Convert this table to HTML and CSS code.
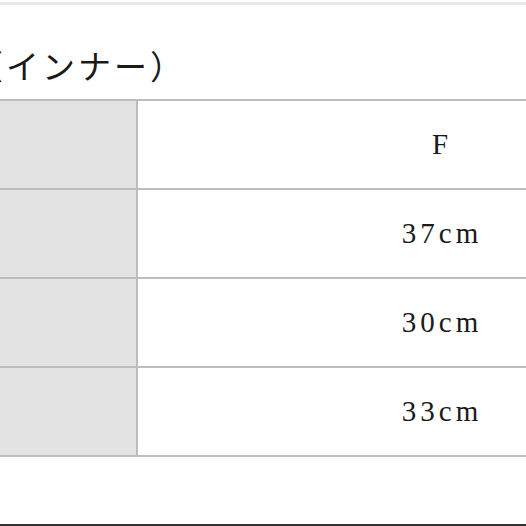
FILE: index.html
```html
<!DOCTYPE html>
<html lang="ja">
<head>
<meta charset="utf-8">
<title>サイズ（インナー）</title>
<link rel="stylesheet" href="styles.css">
</head>
<body>
<div class="page">
  <div class="topline"></div>
  <h1 class="title">サイズ（インナー）</h1>
  <div class="table">
    <div class="row"><div class="head">サイズ</div><div class="cell">F</div></div>
    <div class="row"><div class="head">着丈</div><div class="cell">37cm</div></div>
    <div class="row"><div class="head">身幅</div><div class="cell">30cm</div></div>
    <div class="row"><div class="head">肩幅</div><div class="cell">33cm</div></div>
  </div>
  <div class="bottomline"></div>
</div>
</body>
</html>
```

FILE: styles.css
```css
html, body {
  margin: 0;
  padding: 0;
  background: #ffffff;
  overflow: hidden;
}
.page {
  width: 526px;
  height: 526px;
  display: flex;
  flex-direction: column;
  overflow: hidden;
}
.topline {
  margin-top: 2px;
  height: 3px;
  background: #e9e9e9;
  flex: none;
}
.title {
  margin: 40px 0 0 -137px;
  font-family: "Noto Sans CJK JP", sans-serif;
  font-weight: 400;
  font-size: 33px;
  line-height: 40px;
  letter-spacing: 3px;
  color: #1a1a1a;
  white-space: nowrap;
  flex: none;
}
.table {
  margin-top: 14px;
  margin-left: -230px;
  width: 972px;
  border-top: 2px solid #bdbdbd;
  flex: none;
}
.row {
  display: grid;
  grid-template-columns: 368px 604px;
  height: 87px;
  border-bottom: 2px solid #bdbdbd;
}
.head {
  box-sizing: border-box;
  background: #e3e3e3;
  border-right: 2px solid #bdbdbd;
  display: flex;
  align-items: center;
  justify-content: center;
  font-family: "Noto Sans CJK JP", sans-serif;
  font-weight: 300;
  font-size: 29px;
  letter-spacing: 4px;
  color: #1a1a1a;
}
.cell {
  display: flex;
  align-items: center;
  justify-content: center;
  padding-left: 4px;
  font-family: "Liberation Serif", serif;
  font-size: 29px;
  letter-spacing: 4px;
  color: #1a1a1a;
}
.bottomline {
  margin-top: auto;
  height: 2px;
  background: #333333;
  flex: none;
}
```
